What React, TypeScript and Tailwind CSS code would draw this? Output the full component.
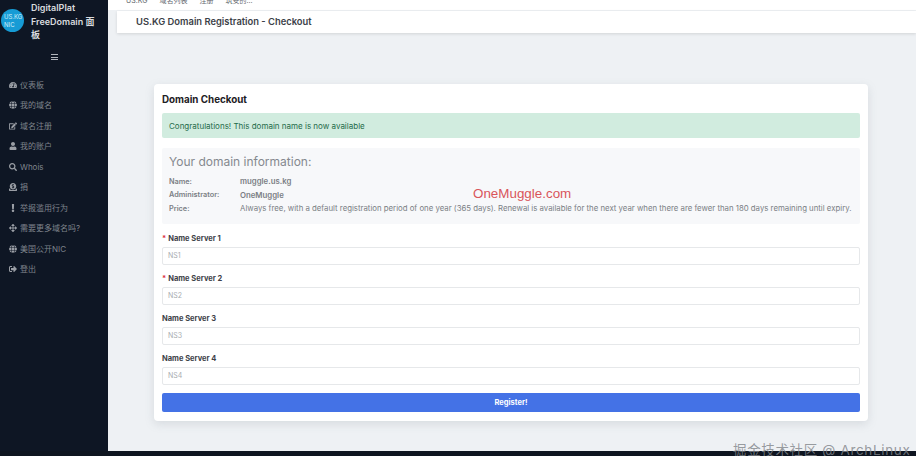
import React from 'react';
import {
  FaTachometerAlt,
  FaGlobe,
  FaEdit,
  FaUser,
  FaSearch,
  FaDonate,
  FaExclamation,
  FaArrowsAlt,
  FaSignOutAlt,
} from 'react-icons/fa';

const font = "font-['Inter','Noto_Sans_CJK_SC',sans-serif]";

const menu = [
  { label: '仪表板', icon: <FaTachometerAlt /> },
  { label: '我的域名', icon: <FaGlobe /> },
  { label: '域名注册', icon: <FaEdit /> },
  { label: '我的账户', icon: <FaUser /> },
  { label: 'Whois', icon: <FaSearch /> },
  { label: '捐', icon: <FaDonate /> },
  { label: '举报滥用行为', icon: <FaExclamation /> },
  { label: '需要更多域名吗?', icon: <FaArrowsAlt /> },
  { label: '美国公开NIC', icon: <FaGlobe /> },
  { label: '登出', icon: <FaSignOutAlt /> },
];

const servers = [
  { label: 'Name Server 1', placeholder: 'NS1', required: true },
  { label: 'Name Server 2', placeholder: 'NS2', required: true },
  { label: 'Name Server 3', placeholder: 'NS3', required: false },
  { label: 'Name Server 4', placeholder: 'NS4', required: false },
];

const info = [
  { key: 'Name:', value: 'muggle.us.kg', bold: true },
  { key: 'Administrator:', value: 'OneMuggle', bold: true },
  {
    key: 'Price:',
    value:
      'Always free, with a default registration period of one year (365 days). Renewal is available for the next year when there are fewer than 180 days remaining until expiry.',
    bold: false,
  },
];

export default function App() {
  return (
    <div className={`${font} relative w-[916px] h-[456px] overflow-hidden flex flex-col bg-[#0e1520]`}>
      <div className="flex h-[451px]">
        <aside className="w-[108px] shrink-0 bg-[#0e1624] flex flex-col">
          <div className="flex items-start h-[44px] pl-[1px] pt-[1px] overflow-hidden">
            <div className="w-[23px] h-[23px] mt-[8px] shrink-0 rounded-full bg-[#169bd5] text-[#d5eef8] text-[6px] leading-[8px] flex items-center pl-[3px]">
              US.KG NIC
            </div>
            <div className="ml-[7px] text-[#d8dade] text-[9px] leading-[13.5px] font-semibold w-[68px]">
              DigitalPlat FreeDomain 面板
            </div>
          </div>
          <div className="flex justify-center mt-[8px] h-[10px] items-center">
            <div className="w-[7px] flex flex-col gap-[1.5px]">
              <div className="h-px bg-[#b0b4bb]" />
              <div className="h-px bg-[#b0b4bb]" />
              <div className="h-px bg-[#b0b4bb]" />
            </div>
          </div>
          <nav className="mt-[15px] flex flex-col gap-[5.5px] pl-[8px]">
            {menu.map((item) => (
              <div key={item.label} className="flex items-center h-[15px] text-[#7f848c] text-[8px]">
                <span className="w-[10px] flex justify-center text-[8px] text-[#9a9ea5] shrink-0">{item.icon}</span>
                <span className="ml-[2px]">{item.label}</span>
              </div>
            ))}
          </nav>
        </aside>

        <main className="flex-1 min-w-0 bg-[#eef1f4] flex flex-col">
          <div className="h-[10px] bg-white overflow-hidden flex gap-[12px] pl-[18px] text-[7px] leading-[2px] text-[#666a70]">
            <span>US.KG</span>
            <span>域名列表</span>
            <span>注册</span>
            <span>筑安的...</span>
          </div>
          <div className="ml-[9px] mt-px h-[22px] bg-white shadow-[0_1px_3px_rgba(0,0,0,0.12)] flex items-center pl-[19px] text-[9.4px] font-semibold text-[#3c4148]">
            US.KG Domain Registration - Checkout
          </div>

          <div className="ml-[46px] mt-[51px] w-[714px] h-[337px] bg-white rounded-[4px] shadow-[0_3px_10px_rgba(120,130,140,0.2)] px-[8px] pt-[9px]">
            <h2 className="text-[9.8px] leading-[13px] font-bold text-[#1d2024]">Domain Checkout</h2>
            <div className="mt-[7px] h-[25px] bg-[#d1ecdf] rounded-[2px] flex items-center pl-[7px] text-[8px] text-[#1f6b4a]">
              Congratulations! This domain name is now available
            </div>
            <div className="mt-[10px] h-[76px] bg-[#f7f8fa] rounded-[2px] px-[7px] pt-[6px]">
              <div className="text-[12px] leading-[16px] text-[#85898f]">Your domain information:</div>
              <div className="mt-[7.5px] flex flex-col gap-[4.5px]">
                {info.map((row) => (
                  <div key={row.key} className="flex h-[9px] items-center text-[7.3px] text-[#7b7f85]">
                    <span className="w-[71px] shrink-0 font-semibold">{row.key}</span>
                    <span className={`whitespace-nowrap ${row.bold ? 'font-semibold text-[7.8px]' : 'text-[7.8px]'}`}>{row.value}</span>
                  </div>
                ))}
              </div>
            </div>

            <div className="mt-[9px] flex flex-col gap-[8px]">
              {servers.map((s) => (
                <div key={s.label}>
                  <div className="h-[12px] flex items-center text-[7.5px] font-bold text-[#3d4147]">
                    {s.required && <span className="text-[#dc3545] mr-[2px]">*</span>}
                    {s.label}
                  </div>
                  <div className="mt-[2px] h-[18px] border border-[#e6e8ea] rounded-[2px] bg-white flex items-center pl-[5px] text-[7px] text-[#a8acb1]">
                    {s.placeholder}
                  </div>
                </div>
              ))}
            </div>

            <button className="mt-[8px] w-full h-[19px] bg-[#4472e6] rounded-[2px] text-white text-[7.5px] font-bold">
              Register!
            </button>
          </div>
        </main>
      </div>

      <div className="absolute left-[473px] top-[185px] text-[13.4px] leading-[18px] text-[#d9555a] font-['Liberation_Sans',sans-serif]">
        OneMuggle.com
      </div>
      <div className="absolute left-[733px] top-[441px] text-[13.5px] leading-[18px] text-[#7f8388]/80 whitespace-nowrap tracking-[0.65px]">
        掘金技术社区 @ ArchLinux
      </div>
    </div>
  );
}
